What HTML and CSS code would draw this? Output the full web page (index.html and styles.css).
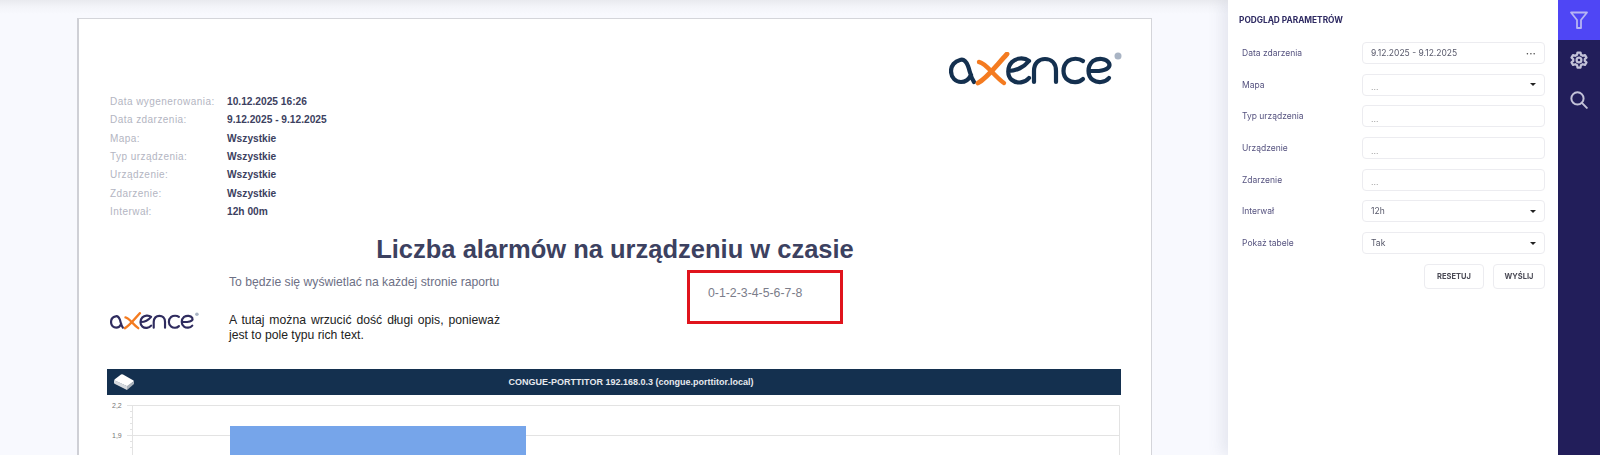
FILE: index.html

```html
<!DOCTYPE html>
<html lang="pl">
<head>
  <meta charset="UTF-8" />
  <title>Podgląd raportu</title>
  <link rel="stylesheet" href="styles.css">
</head>
<body>

<svg class="defs" width="0" height="0">
  <symbol id="axence" viewBox="0 0 175 36">
    <g fill="none" stroke="currentColor" stroke-width="4.2" stroke-linecap="round">
      <path d="M25 30 C21 24 21 19 19 14 C17 9 14 7 11 8 A11.3 11.3 0 0 0 2 19 C2 26 7 30 12 30 C17 30 20 27 22 23" />
      <path d="M80 9 C75 5 67 6 63 10 C58 15 58 24 63 28 C68 32 76 31 80 26 M60 19 C67 19 75 15 80 9" />
      <path d="M85 30 V19 C85 11 90 7 96 7 C102 7 107 11 107 19 V30" />
      <path d="M134 9 C130 6 123 6 119 9 C113 14 113 24 119 28 C123 31 130 31 134 27" />
      <path d="M160 26 C156 31 148 31 144 28 C138 24 138 14 144 9 C149 6 157 6 160 11 C162 15 158 18 150 19 L141 19" />
    </g>
    <g fill="none" stroke="#f47b20" stroke-linecap="round">
      <path stroke-width="4.8" d="M29 31 C38 26 46 15 58 2" />
      <path stroke-width="4.4" d="M30 10 C37 11 45 24 55 31" />
    </g>
    <circle cx="169" cy="4" r="3.5" fill="#a9b4c4" />
  </symbol>
</svg>

<div class="app">
  <div class="preview">
    <div class="sheet">
      <div class="sheet-logo">
        <svg class="logo-big"><use href="#axence" /></svg>
      </div>

      <div class="meta">
        <span class="meta-label">Data wygenerowania:</span><span class="meta-value">10.12.2025 16:26</span>
        <span class="meta-label">Data zdarzenia:</span><span class="meta-value">9.12.2025 - 9.12.2025</span>
        <span class="meta-label">Mapa:</span><span class="meta-value">Wszystkie</span>
        <span class="meta-label">Typ urządzenia:</span><span class="meta-value">Wszystkie</span>
        <span class="meta-label">Urządzenie:</span><span class="meta-value">Wszystkie</span>
        <span class="meta-label">Zdarzenie:</span><span class="meta-value">Wszystkie</span>
        <span class="meta-label">Interwał:</span><span class="meta-value">12h 00m</span>
      </div>

      <h1 class="report-title">Liczba alarmów na urządzeniu w czasie</h1>

      <div class="page-header">
        <svg class="logo-small"><use href="#axence" /></svg>
        <div class="header-text">
          <p class="header-line">To będzie się wyświetlać na każdej stronie raportu</p>
          <p class="header-desc">A tutaj można wrzucić dość długi opis, ponieważ jest to pole typu rich text.</p>
        </div>
        <div class="page-box">0-1-2-3-4-5-6-7-8</div>
      </div>

      <div class="device-bar">
        <svg class="device-icon" width="22" height="18" viewBox="0 0 22 18">
          <path fill="#fff" d="M1.5 6.5 L8 1.5 Q9 1 10 1.5 L20.5 7.5 Q21 8 20.5 8.5 L14.5 13.5 L1.5 7.5 Z" />
          <path fill="#d5d9de" d="M1 7 L14 13 L14 17 L2 11 Q1 10.5 1 10 Z" />
          <path fill="#aab2bb" d="M14 13 L21 8 L21 11 L14 17 Z" />
        </svg>
        <span class="device-name">CONGUE-PORTTITOR 192.168.0.3 (congue.porttitor.local)</span>
      </div>

      <svg class="chart" width="1014" height="60" viewBox="0 0 1014 60">
        <g fill="none" stroke="#e3e3e3" stroke-width="1">
          <path d="M20 10.5 H1012.5 V60" />
          <path d="M20 40.5 H1012" />
          <path d="M25.5 10 V60" />
          <path d="M23 16.5 H26 M23 22.5 H26 M23 28.5 H26 M23 34.5 H26 M23 46.5 H26 M23 52.5 H26" />
        </g>
        <rect x="123" y="31" width="296" height="29" fill="#76a5ea" />
        <text x="5" y="13" class="tick">2,2</text>
        <text x="5" y="43" class="tick">1,9</text>
      </svg>
    </div>
  </div>

  <aside class="panel">
    <h2 class="panel-title">PODGLĄD PARAMETRÓW</h2>

    <div class="field">
      <label>Data zdarzenia</label>
      <div class="control"><span>9.12.2025 - 9.12.2025</span><span class="dots">•••</span></div>
    </div>
    <div class="field">
      <label>Mapa</label>
      <div class="control empty"><span>...</span><span class="caret"></span></div>
    </div>
    <div class="field">
      <label>Typ urządzenia</label>
      <div class="control empty"><span>...</span></div>
    </div>
    <div class="field">
      <label>Urządzenie</label>
      <div class="control empty"><span>...</span></div>
    </div>
    <div class="field">
      <label>Zdarzenie</label>
      <div class="control empty"><span>...</span></div>
    </div>
    <div class="field">
      <label>Interwał</label>
      <div class="control"><span>12h</span><span class="caret"></span></div>
    </div>
    <div class="field">
      <label>Pokaż tabele</label>
      <div class="control"><span>Tak</span><span class="caret"></span></div>
    </div>

    <div class="actions">
      <button class="btn btn-reset">RESETUJ</button>
      <button class="btn btn-send">WYŚLIJ</button>
    </div>
  </aside>

  <nav class="rail">
    <a class="rail-item active">
      <svg width="20" height="20" viewBox="0 0 20 20" fill="none" stroke="currentColor" stroke-width="1.8" stroke-linejoin="round">
        <path d="M2 2.5 H18 L12 10 V18 H8 V10 Z" />
      </svg>
    </a>
    <a class="rail-item">
      <svg width="18" height="18" viewBox="0 0 24 24" fill="none" stroke="currentColor" stroke-width="3" stroke-linejoin="round">
        <circle cx="12" cy="12" r="3.2" />
        <path d="M10 2 H14 L14.6 5 L17 6.4 L20 5.4 L22 8.8 L19.7 10.8 V13.2 L22 15.2 L20 18.6 L17 17.6 L14.6 19 L14 22 H10 L9.4 19 L7 17.6 L4 18.6 L2 15.2 L4.3 13.2 V10.8 L2 8.8 L4 5.4 L7 6.4 L9.4 5 Z" />
      </svg>
    </a>
    <a class="rail-item">
      <svg width="18" height="18" viewBox="0 0 20 20" fill="none" stroke="currentColor" stroke-width="2.2" stroke-linecap="round">
        <circle cx="8.3" cy="8.3" r="6.8" />
        <path d="M13.2 13.2 L18.7 18.7" />
      </svg>
    </a>
  </nav>
</div>

</body>
</html>
```

FILE: styles.css

```css
html, body {
  margin: 0;
  padding: 0;
  height: 455px;
  overflow: hidden;
}
body {
  background: #f8f9fe;
  font-family: "Liberation Sans", Arial, sans-serif;
}
.defs {
  display: block;
  height: 0;
}
.app {
  display: flex;
  height: 455px;
  overflow: hidden;
  filter: blur(0.35px);
}

/* report preview */
.preview {
  flex: 1;
  min-width: 0;
  padding: 18px 0 0 77px;
  background: linear-gradient(#e9eaef 0, #f3f4f9 7px, #f8f9fe 14px);
}
.sheet {
  width: 1075px;
  height: 437px;
  box-sizing: border-box;
  background: #fff;
  border: 1px solid #d4d5da;
  border-left: 2px solid #cfd0d6;
  border-bottom: none;
  padding-left: 28px;
  overflow: hidden;
}
.sheet-logo {
  display: flex;
  justify-content: flex-end;
  padding: 33px 27px 0 0;
  height: 40px;
}
.logo-big {
  width: 175px;
  height: 36px;
  color: #14304f;
}
.meta {
  display: grid;
  grid-template-columns: 117px 1fr;
  grid-auto-rows: 18.3px;
  align-items: center;
  margin: 0.5px 0 0 3px;
  font-size: 10px;
}
.meta-label {
  color: #b3b5c2;
  letter-spacing: 0.45px;
}
.meta-value {
  color: #3c4160;
  font-weight: bold;
  font-size: 10.2px;
}
.report-title {
  margin: 13.5px 0 0;
  padding-right: 28px;
  text-align: center;
  font-size: 25.5px;
  line-height: 30px;
  color: #3c4160;
}
.page-header {
  display: grid;
  grid-template-columns: 122px 458px 156px;
  height: 99px;
  margin-top: 6px;
}
.logo-small {
  width: 90px;
  height: 19px;
  margin: 42px 0 0 3px;
  color: #2f2c5f;
}
.header-text {
  font-size: 12.2px;
}
.header-line {
  margin: 5px 0 0;
  line-height: 14px;
  color: #6d7085;
}
.header-desc {
  width: 271px;
  margin: 24px 0 0;
  line-height: 15px;
  color: #222;
  text-align: justify;
}
.page-box {
  height: 54px;
  box-sizing: border-box;
  border: 3px solid #e0141c;
  padding: 13px 0 0 18px;
  font-size: 12.3px;
  line-height: 14px;
  color: #7b7d8a;
}
.device-bar {
  display: flex;
  align-items: center;
  width: 1014px;
  height: 26px;
  background: #14304f;
}
.device-icon {
  flex: none;
  width: 22px;
  margin: 0 6px 0 6px;
}
.device-name {
  flex: 1;
  text-align: center;
  font-size: 9px;
  font-weight: bold;
  color: #e6e9ee;
}
.chart {
  display: block;
}
.tick {
  font-size: 7px;
  fill: #777;
}

/* parameter panel */
.panel {
  flex: none;
  width: 330px;
  box-sizing: border-box;
  padding: 15px 13px 0 11px;
  background: #fff;
  box-shadow: -6px 0 14px rgba(90, 95, 130, 0.12);
  font-family: Inter, "Noto Sans", sans-serif;
  font-size: 8.5px;
}
.panel-title {
  margin: 0 0 17px;
  font-size: 8.3px;
  line-height: 10px;
  font-weight: 700;
  color: #2e2a62;
}
.field {
  display: grid;
  grid-template-columns: 123px 1fr;
  align-items: center;
  height: 22px;
  margin-bottom: 9.7px;
}
.field label {
  padding-left: 3px;
  color: #55527f;
}
.control {
  display: flex;
  justify-content: space-between;
  align-items: center;
  height: 22px;
  box-sizing: border-box;
  padding: 0 8px;
  background: #fff;
  border: 1px solid #ececf0;
  border-radius: 4px;
  color: #57586a;
}
.control.empty span:first-child {
  padding-top: 5px;
  color: #999;
}
.dots {
  font-size: 5px;
  letter-spacing: 0.5px;
  color: #444;
}
.caret {
  width: 0;
  height: 0;
  border-left: 3px solid transparent;
  border-right: 3px solid transparent;
  border-top: 3px solid #222;
}
.actions {
  display: flex;
  justify-content: flex-end;
  gap: 9px;
  margin-top: 8px;
}
.btn {
  height: 25px;
  padding: 0;
  background: #fff;
  border: 1px solid #ececf0;
  border-radius: 4px;
  font-family: inherit;
  font-size: 7.5px;
  font-weight: 700;
  color: #4a4a55;
}
.btn-reset {
  width: 60px;
}
.btn-send {
  width: 52px;
}

/* icon rail */
.rail {
  flex: none;
  width: 42px;
  background: #221e5a;
}
.rail-item {
  display: flex;
  justify-content: center;
  align-items: center;
  height: 40px;
  color: #c3c2d8;
}
.rail-item.active {
  background: #4f46f5;
  color: #b6b4f3;
}
```
